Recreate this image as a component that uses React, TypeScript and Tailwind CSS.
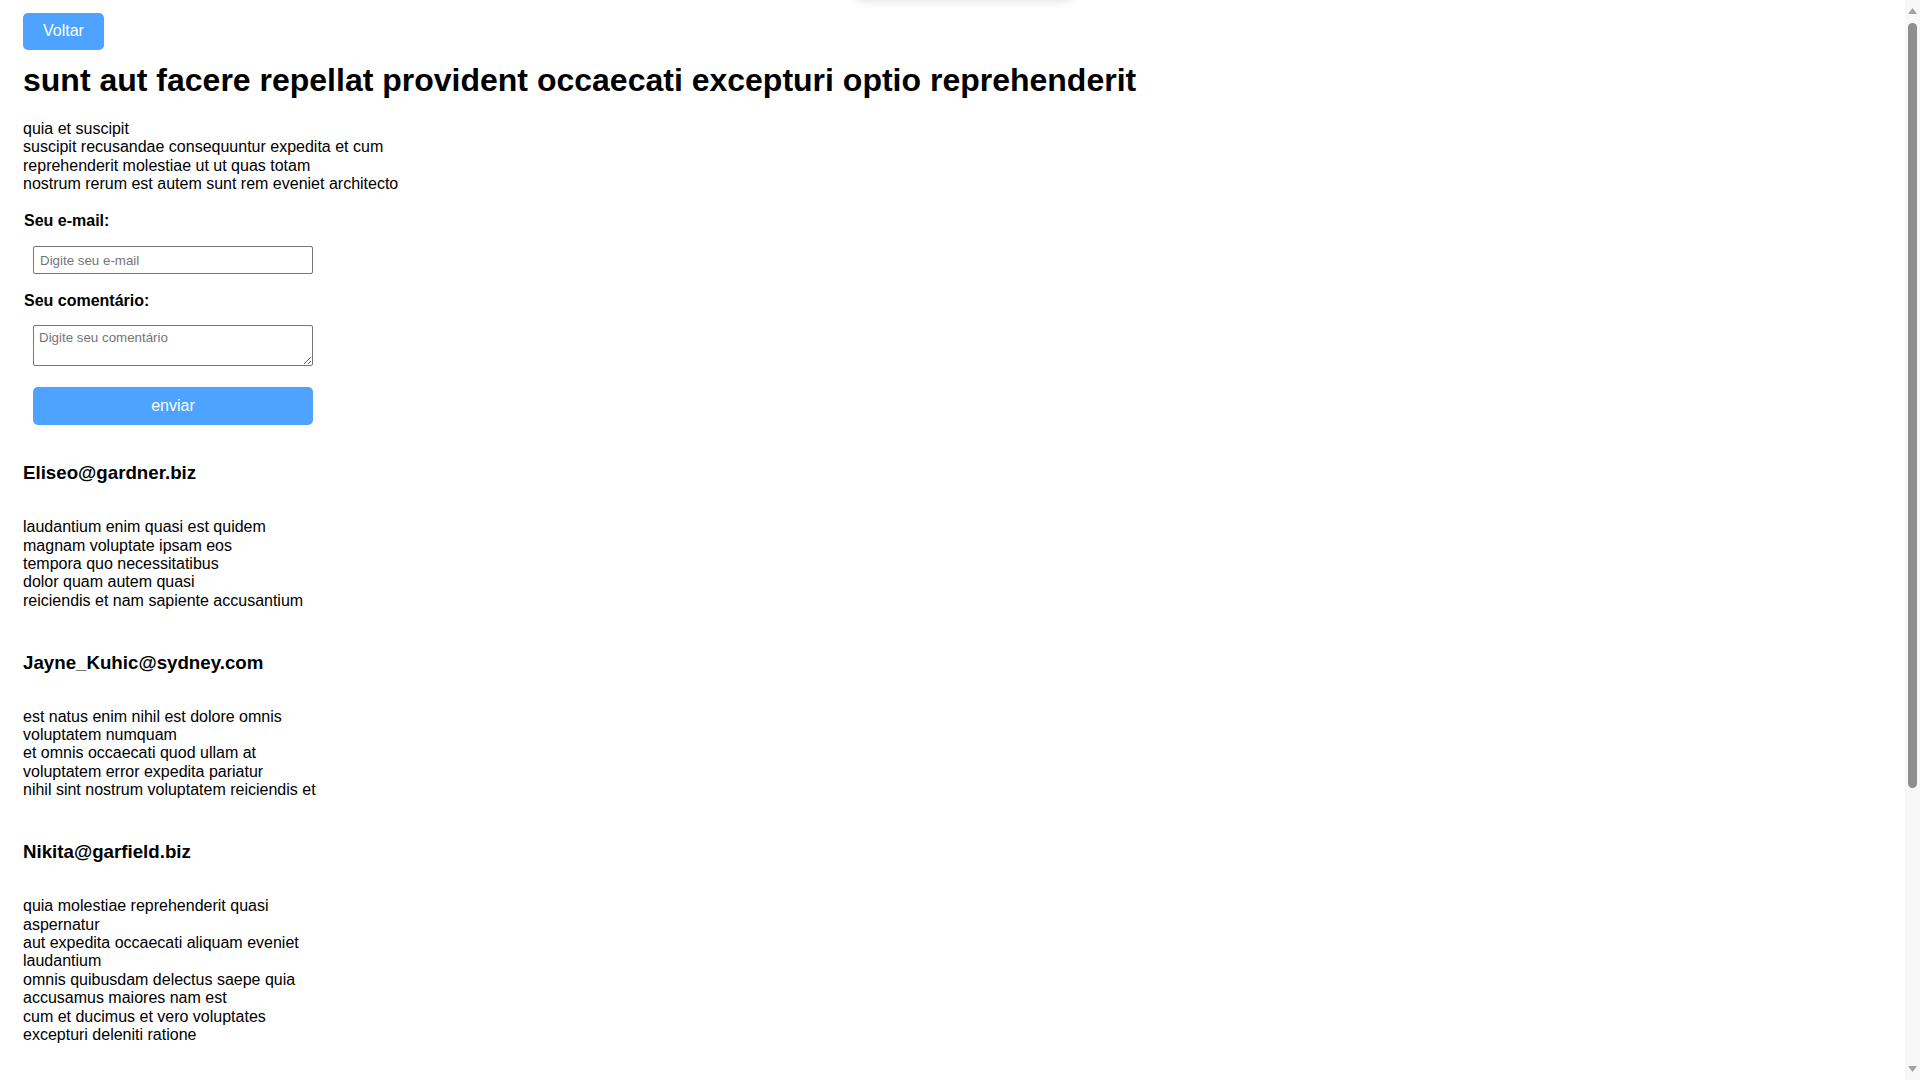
import { useState } from "react";

type Comment = { id: number; email: string; body: string };

const post = {
  title: "sunt aut facere repellat provident occaecati excepturi optio reprehenderit",
  body: "quia et suscipit\nsuscipit recusandae consequuntur expedita et cum\nreprehenderit molestiae ut ut quas totam\nnostrum rerum est autem sunt rem eveniet architecto",
};

const comments: Comment[] = [
  {
    id: 1,
    email: "Eliseo@gardner.biz",
    body: "laudantium enim quasi est quidem magnam voluptate ipsam eos\ntempora quo necessitatibus\ndolor quam autem quasi\nreiciendis et nam sapiente accusantium",
  },
  {
    id: 2,
    email: "Jayne_Kuhic@sydney.com",
    body: "est natus enim nihil est dolore omnis voluptatem numquam\net omnis occaecati quod ullam at\nvoluptatem error expedita pariatur\nnihil sint nostrum voluptatem reiciendis et",
  },
  {
    id: 3,
    email: "Nikita@garfield.biz",
    body: "quia molestiae reprehenderit quasi aspernatur\naut expedita occaecati aliquam eveniet laudantium\nomnis quibusdam delectus saepe quia accusamus maiores nam est\ncum et ducimus et vero voluptates excepturi deleniti ratione",
  },
  {
    id: 4,
    email: "Lew@alysha.tv",
    body: "non et atque\noccaecati deserunt quas accusantium unde odit nobis qui voluptatem\nquia voluptas consequuntur itaque dolor\net qui rerum deleniti ut occaecati",
  },
  {
    id: 5,
    email: "Hayden@althea.biz",
    body: "harum non quasi et ratione\ntempore iure ex voluptates in ratione\nharum architecto fugit inventore cupiditate\nvoluptates magni quo et",
  },
];

function Scrollbar() {
  return (
    <div className="fixed right-0 top-0 flex h-screen w-[15px] flex-col items-center bg-[#f8f8f8]">
      <svg width="9" height="6" viewBox="0 0 9 6" className="mt-[8px] shrink-0">
        <path d="M4.5 0 L9 6 L0 6 Z" fill="#a3a3a3" />
      </svg>
      <div className="mt-[9px] h-[765px] w-[9px] shrink-0 rounded-full bg-[#8f8f8f]" />
      <div className="flex-1" />
      <svg width="9" height="6" viewBox="0 0 9 6" className="mb-[8px] shrink-0">
        <path d="M0 0 L9 0 L4.5 6 Z" fill="#a3a3a3" />
      </svg>
    </div>
  );
}

export default function App() {
  const [email, setEmail] = useState("");
  const [text, setText] = useState("");

  return (
    <div className="min-h-screen bg-white text-black font-['Liberation_Sans',Arial,sans-serif] pl-[23px] pt-[13px] pb-[40px]">
      {/* toast container peeking from the top */}
      <div className="fixed left-[855px] top-[-40px] h-[40px] w-[216px] rounded-md bg-white shadow-[0_1px_10px_rgba(0,0,0,0.12)]" />

      <button className="h-[37px] w-[81px] rounded-[5px] bg-[#4da3ff] text-base text-white leading-[18.4px]">Voltar</button>

      <h1 className="mt-[11.5px] text-[32px] font-bold leading-[36.8px]">{post.title}</h1>

      <p className="mt-[21.7px] whitespace-pre-line text-base leading-[18.4px]">{post.body}</p>

      <form className="flex flex-col items-start" onSubmit={(e) => e.preventDefault()}>
        <label className="ml-px mt-[18.7px] block text-base font-bold leading-[18.4px]">Seu e-mail:</label>
        <input
          type="email"
          value={email}
          onChange={(e) => setEmail(e.target.value)}
          placeholder="Digite seu e-mail"
          className="ml-[10px] mt-[15.3px] h-[28px] w-[280px] rounded-[2px] border border-[#767676] px-[6px] text-[13.33px] placeholder:text-[#757575] outline-none"
        />

        <label className="ml-px mt-[18px] block text-base font-bold leading-[18.4px]">Seu comentário:</label>
        <textarea
          value={text}
          onChange={(e) => setText(e.target.value)}
          placeholder="Digite seu comentário"
          className="ml-[10px] mt-[15px] block h-[41px] w-[280px] resize rounded-[2px] border border-[#767676] px-[5px] py-[4px] text-[13.33px] leading-[normal] placeholder:text-[#757575] outline-none"
        />

        <button type="submit" className="ml-[10px] mt-[20.7px] h-[38px] w-[280px] rounded-[5px] bg-[#4da3ff] text-base text-white leading-[18.4px]">
          enviar
        </button>
      </form>

      <div className="mt-[37px] flex flex-col gap-[41.5px]">
        {comments.map((c) => (
          <div key={c.id}>
            <h3 className="text-[18.72px] font-bold leading-[21.5px]">{c.email}</h3>
            <p className="mt-[34.5px] w-[300px] whitespace-pre-line text-base leading-[18.4px]">{c.body}</p>
          </div>
        ))}
      </div>

      <Scrollbar />
    </div>
  );
}
